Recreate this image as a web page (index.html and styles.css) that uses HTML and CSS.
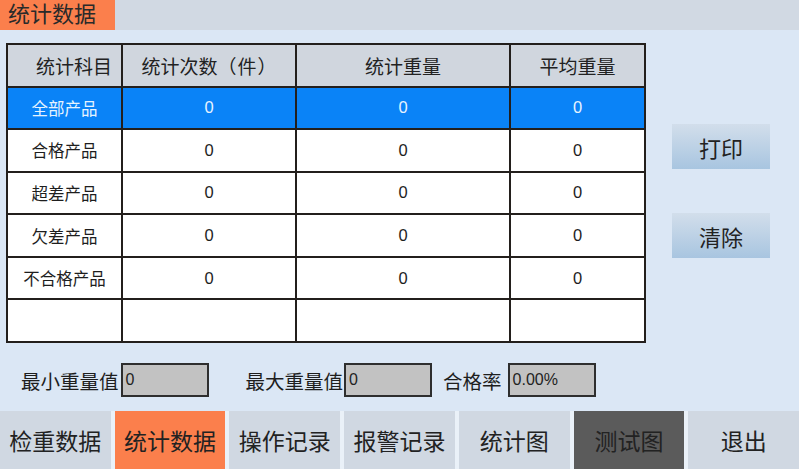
FILE: index.html
```html
<!DOCTYPE html>
<html lang="zh">
<head>
<meta charset="utf-8">
<title>统计数据</title>
<link rel="stylesheet" href="styles.css">
</head>
<body>
<div class="screen">
  <div class="topbar"><div class="title-tab">统计数据</div></div>
  <div class="main">
    <div class="content">
      <div class="grid">
        <div class="cell head first">统计科目</div>
        <div class="cell head">统计次数（<span class="unit">件</span>）</div>
        <div class="cell head">统计重量</div>
        <div class="cell head">平均重量</div>

        <div class="cell sel">全部产品</div>
        <div class="cell sel">0</div>
        <div class="cell sel">0</div>
        <div class="cell sel">0</div>

        <div class="cell">合格产品</div>
        <div class="cell">0</div>
        <div class="cell">0</div>
        <div class="cell">0</div>

        <div class="cell">超差产品</div>
        <div class="cell">0</div>
        <div class="cell">0</div>
        <div class="cell">0</div>

        <div class="cell">欠差产品</div>
        <div class="cell">0</div>
        <div class="cell">0</div>
        <div class="cell">0</div>

        <div class="cell">不合格产品</div>
        <div class="cell">0</div>
        <div class="cell">0</div>
        <div class="cell">0</div>

        <div class="cell"></div>
        <div class="cell"></div>
        <div class="cell"></div>
        <div class="cell"></div>
      </div>
      <div class="side">
        <div class="btn">打印</div>
        <div class="btn">清除</div>
      </div>
    </div>
    <div class="info">
      <span class="lbl l1">最小重量值</span><span class="box">0</span>
      <span class="lbl l2">最大重量值</span><span class="box">0</span>
      <span class="lbl l3">合格率</span><span class="box">0.00%</span>
    </div>
  </div>
  <div class="nav">
    <div class="tab">检重数据</div>
    <div class="tab active">统计数据</div>
    <div class="tab">操作记录</div>
    <div class="tab">报警记录</div>
    <div class="tab">统计图</div>
    <div class="tab dark">测试图</div>
    <div class="tab">退出</div>
  </div>
</div>
</body>
</html>
```

FILE: styles.css
```css
* { box-sizing: border-box; }
html, body { margin: 0; padding: 0; }
body {
  font-family: "Liberation Sans", "Noto Sans CJK SC", sans-serif;
  color: #222;
  background: #dbe7f5;
}
.screen {
  width: 799px;
  height: 469px;
  display: flex;
  flex-direction: column;
  overflow: hidden;
  background: #dbe7f5;
}
.topbar {
  height: 30px;
  background: #d1d9e3;
  display: flex;
}
.title-tab {
  width: 115px;
  height: 30px;
  background: #fb7f4c;
  font-size: 22px;
  line-height: 30px;
  padding-left: 8px;
  color: #2a2a2a;
}
.main {
  flex: 1;
  padding-top: 13px;
}
.content {
  display: flex;
  padding-left: 6px;
}
.grid {
  display: grid;
  grid-template-columns: 113px 172px 212px 133px;
  grid-template-rows: repeat(7, 1fr);
  gap: 2px;
  padding: 2px;
  width: 640px;
  height: 300px;
  background: #231f1c;
}
.cell {
  background: #fff;
  display: flex;
  align-items: center;
  justify-content: center;
  font-size: 16.5px;
  color: #1e1e1e;
  white-space: pre;
}
.cell.head {
  background: #d0d6de;
  font-size: 19px;
  color: #222;
}
.cell.head.first { padding-left: 19px; }
.unit { margin: 0 1px; }
.cell.sel {
  background: #0a83f7;
  color: #e6f3ff;
}
.side {
  display: flex;
  flex-direction: column;
  gap: 44px;
  margin-left: 26px;
  padding-top: 81px;
}
.btn {
  width: 98px;
  height: 45px;
  background: linear-gradient(#d2deeb, #a8c5e0);
  display: flex;
  align-items: center;
  justify-content: center;
  font-size: 22px;
  color: #222;
}
.info {
  display: flex;
  align-items: center;
  height: 34px;
  margin-top: 20px;
}
.lbl {
  font-size: 19.5px;
  color: #1e1e1e;
}
.l1 { margin-left: 21px; margin-right: 2px; }
.l2 { margin-left: 37px; margin-right: 1px; }
.l3 { margin-left: 11px; margin-right: 6px; }
.box {
  width: 88px;
  height: 34px;
  background: #c2c2c2;
  border: 2px solid #2e2e2e;
  font-size: 16px;
  line-height: 30px;
  padding-left: 3px;
  color: #222;
}
.nav {
  height: 58px;
  display: flex;
  gap: 4px;
  background: #eaf1f8;
}
.tab {
  flex: 1;
  background: #d0d8e2;
  display: flex;
  align-items: center;
  justify-content: center;
  font-size: 23px;
  color: #222;
}
.tab.active { background: #fb7f4c; }
.tab.dark { background: #5b5b5b; }
```
